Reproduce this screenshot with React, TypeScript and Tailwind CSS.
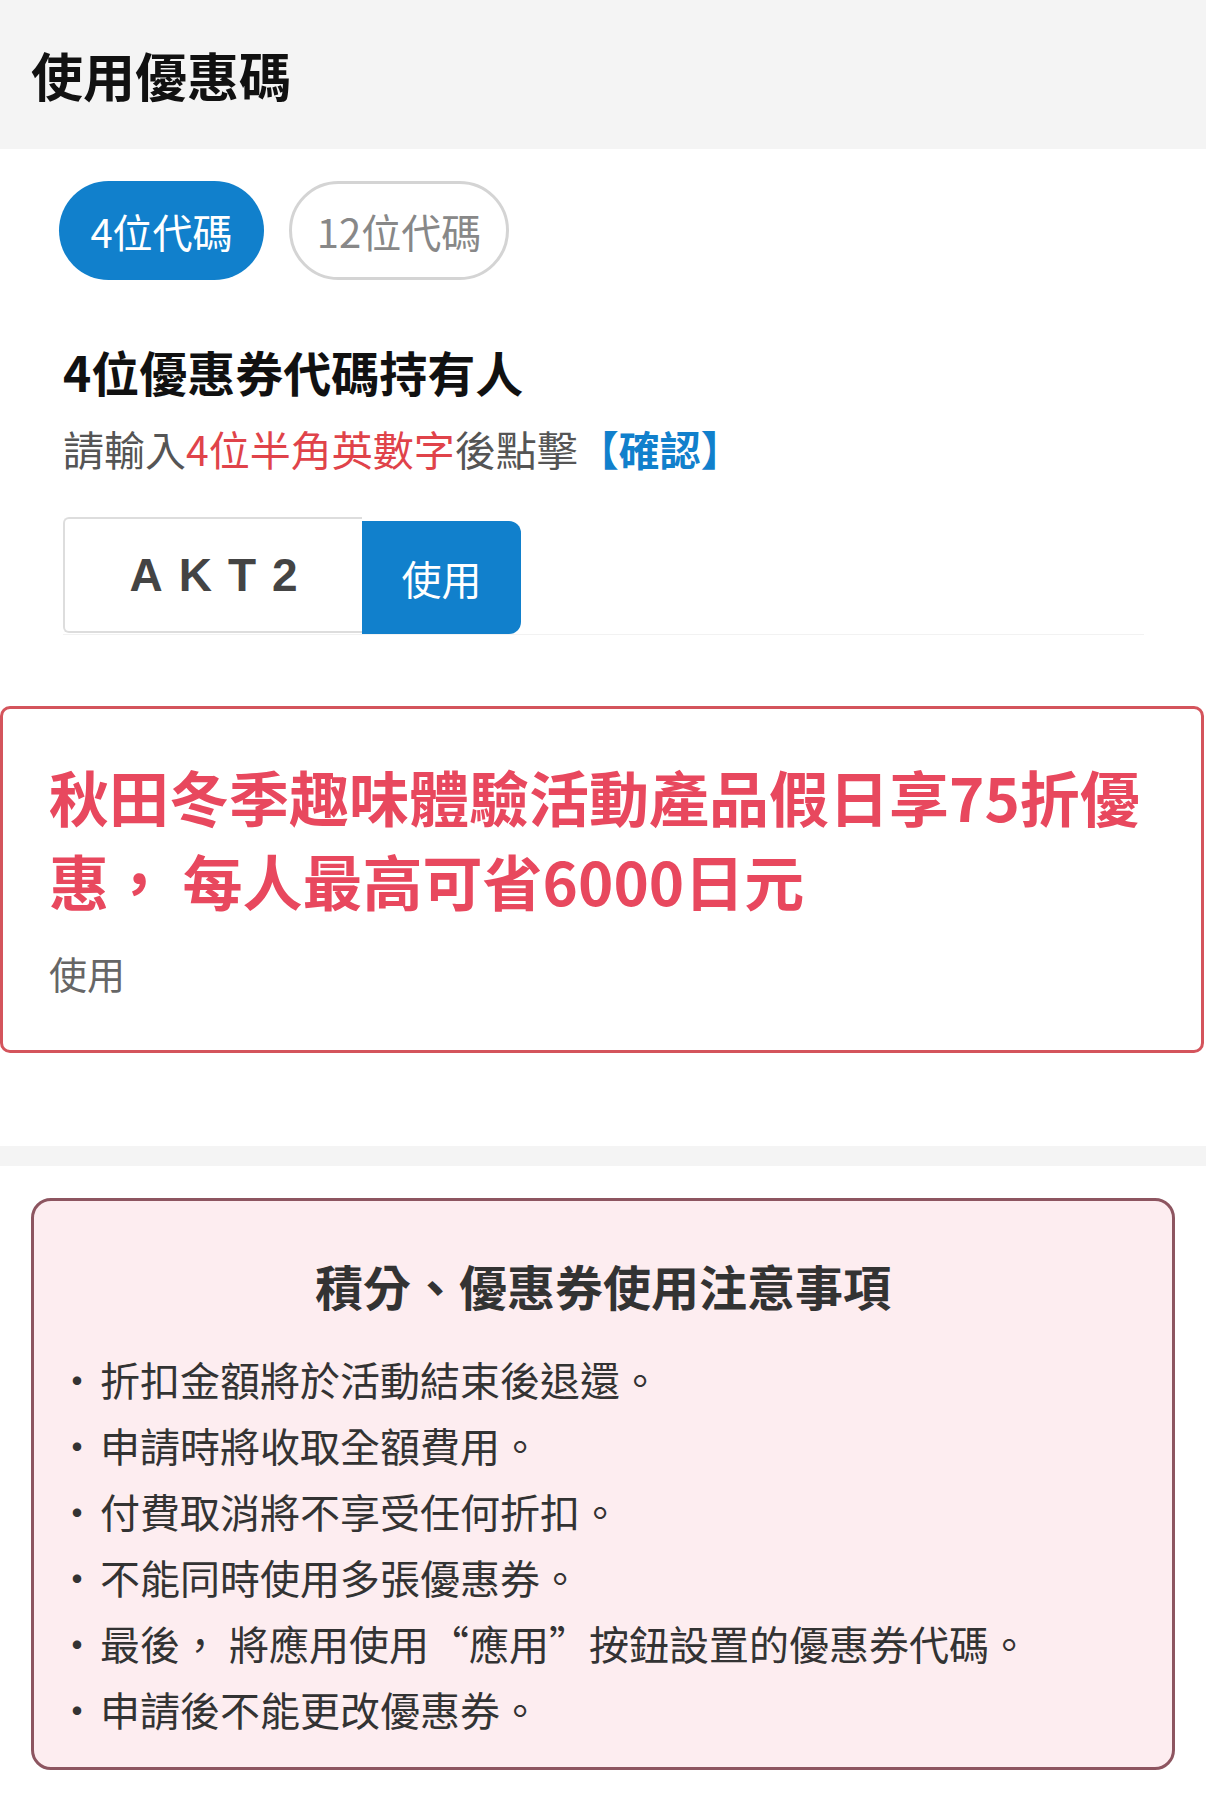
import { useState } from "react";

const notes = [
  "折扣金額將於活動結束後退還。",
  "申請時將收取全額費用。",
  "付費取消將不享受任何折扣。",
  "不能同時使用多張優惠券。",
  "最後， 將應用使用“應用”按鈕設置的優惠券代碼。",
  "申請後不能更改優惠券。",
];

const App = () => {
  const [tab, setTab] = useState(4);
  const [code, setCode] = useState("AKT2");

  return (
    <div className="w-[1206px] min-h-[1794px] bg-white font-['Noto_Sans_CJK_TC','Noto_Sans',sans-serif]">
      <header className="h-[149px] bg-[#f4f4f4] flex items-center pl-[31px]">
        <h1 className="text-[52px] font-bold text-[#111] leading-none">使用優惠碼</h1>
      </header>

      <div className="flex gap-[25px] pl-[59px] pt-[32px]">
        <button
          onClick={() => setTab(4)}
          className={
            tab === 4
              ? "w-[205px] h-[99px] rounded-full bg-[#1180cc] text-white text-[40px] leading-none"
              : "w-[205px] h-[99px] rounded-full border-[3px] border-[#d4d4d4] text-[#888] text-[40px] leading-none"
          }
        >
          4位代碼
        </button>
        <button
          onClick={() => setTab(12)}
          className={
            tab === 12
              ? "w-[220px] h-[99px] rounded-full bg-[#1180cc] text-white text-[40px] leading-none"
              : "w-[220px] h-[99px] rounded-full border-[3px] border-[#d4d4d4] text-[#888] text-[40px] leading-none"
          }
        >
          12位代碼
        </button>
      </div>

      <div className="pl-[63px] pr-[62px]">
        <h2 className="mt-[59px] text-[48px] leading-[64px] font-bold text-[#111]">
          4位優惠券代碼持有人
        </h2>
        <p className="mt-[17px] text-[41px] leading-[56px] text-[#555]">
          請輸入<span className="text-[#e0434a]">4位半角英數字</span>後點擊
          <span className="font-bold text-[#1180cc]">【確認】</span>
        </p>
        <div className="mt-[41px] flex border-b border-[#f2f2f2]">
          <input
            value={code}
            onChange={(e) => setCode(e.target.value)}
            maxLength={4}
            className="w-[299px] h-[116px] border-2 border-[#dddddd] border-r-0 rounded-l-[6px] pl-[16px] text-center text-[46px] font-bold tracking-[16px] text-[#444] font-['Liberation_Sans',sans-serif] outline-none"
          />
          <button className="w-[159px] h-[113px] mt-[4px] bg-[#1180cc] rounded-r-[12px] text-white text-[40px]">
            使用
          </button>
        </div>
      </div>

      <div className="mt-[71px] mr-[2px] border-[3px] border-[#d4545c] rounded-[10px] pl-[46px] pr-[40px] pt-[45px] pb-[51px]">
        <p className="text-[60px] leading-[84px] font-bold text-[#e8485e]">
          秋田冬季趣味體驗活動產品假日享75折優惠， 每人最高可省6000日元
        </p>
        <p className="mt-[25px] text-[38px] leading-[52px] text-[#666]">使用</p>
      </div>

      <div className="mt-[93px] h-[20px] bg-[#f4f4f4]" />

      <div className="mt-[32px] mx-[31px] border-[3px] border-[#8d5560] rounded-[20px] bg-[#fdedf0] pt-[54px] pb-[25px] px-[23px]">
        <h3 className="text-center text-[48px] leading-[60px] font-bold text-[#333]">
          積分、優惠券使用注意事項
        </h3>
        <ul className="mt-[31px]">
          {notes.map((n) => (
            <li key={n} className="flex text-[40px] leading-[66px] text-[#333]">
              <span className="w-[43px] shrink-0 overflow-hidden">・</span>
              <span>{n}</span>
            </li>
          ))}
        </ul>
      </div>
    </div>
  );
};

export default App;
